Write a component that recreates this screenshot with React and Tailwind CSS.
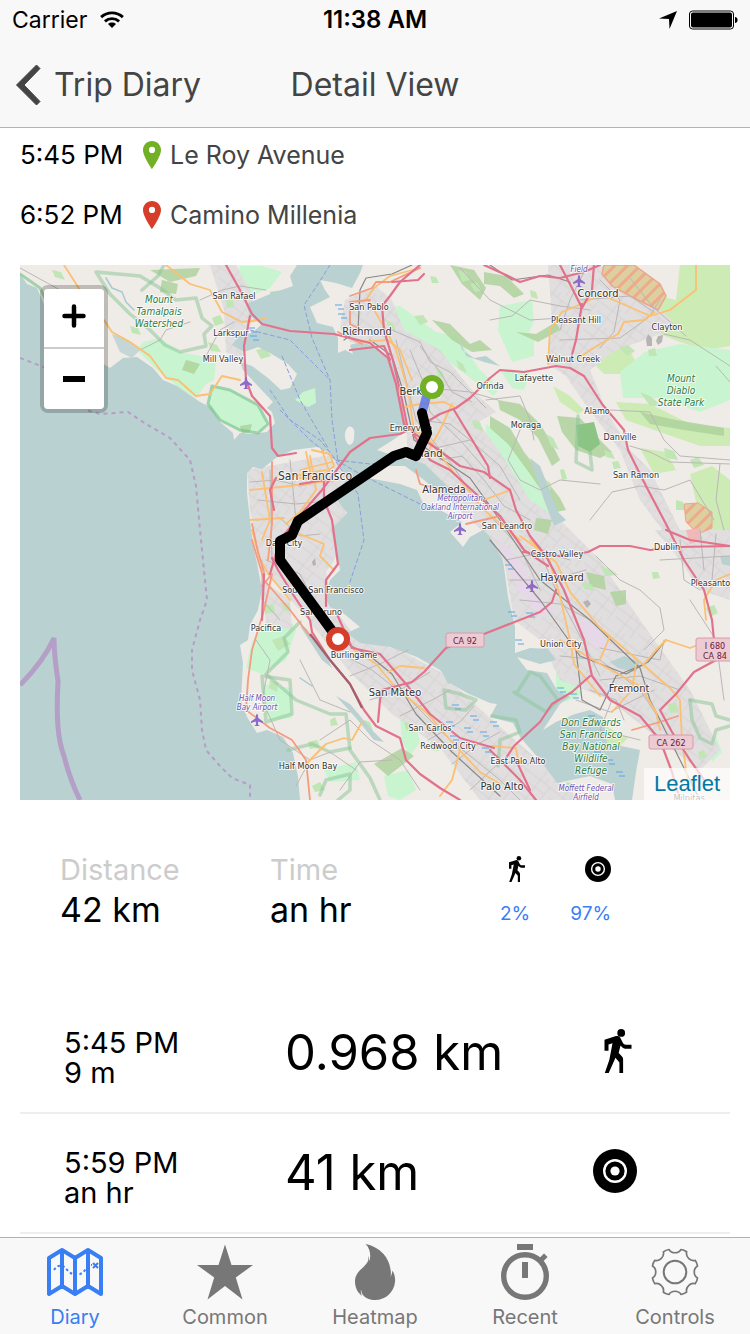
import React from "react";

const WATER =
  "M20 274L27 284L37 288L43 302L62 335L85 352L110 368L123 358L137 357L153 368L163 380L177 386L190 395L200 402L212 408L220 422L233 433L234 440L240 433L253 434L267 432L275 423L272 412L267 408L273 402L257 385L243 370L240 362L252 366L268 378L281 390L290 388L297 374L288 364L270 353L258 347L244 352L232 345L240 335L252 333L262 324L250 316L246 304L256 300L270 294L293 286L290 276L297 265L363 265L360 273L352 288L336 283L320 280L325 290L330 297L310 307L317 323L333 327L338 338L338 353L345 350L353 354L350 345L360 342L377 347L393 363L397 377L403 410L407 430L393 440L377 450L395 456L410 460L425 464L445 484L462 500L456 505L440 494L424 480L405 466L382 466L363 477L400 484L417 490L423 503L440 510L462 522L450 532L463 547L470 537L483 530L490 537L503 560L508 597L515 627L515 653L530 648L548 649L556 660L540 664L517 657L527 670L547 673L557 690L570 697L560 704L543 730L556 722L575 714L590 710L603 717L607 743L640 750L636 772L632 800L615 800L612 784L590 776L557 783L540 760L520 737L513 723L490 717L497 704L490 703L467 693L450 683L440 670L417 657L390 647L360 643L347 633L360 627L343 613L330 607L325 597L330 580L340 570L337 553L331 530L347 513L337 500L347 477L337 463L330 453L317 447L293 450L277 457L262 469L253 467L247 473L247 493L250 520L253 545L257 563L262 590L258 610L250 625L248 640L240 645L243 663L241 700L247 717L257 733L267 730L283 737L293 753L298 777L300 800L20 800Z";

const MINT = [
  "M143 342L160 338L180 352L200 356L216 362L214 380L206 384L196 398L177 386L155 368L137 350Z",
  "M212 386L230 390L258 405L266 420L262 431L240 432L220 420L208 404Z",
  "M240 266L262 266L282 272L270 288L250 296L236 284Z",
  "M386 307L400 306L436 332L456 336L480 370L499 388L494 396L470 378L440 355L420 340L392 322Z",
  "M295 400L303 392L315 388L316 403L308 407Z",
  "M486 424L510 440L528 466L558 512L562 532L545 530L525 500L503 462L486 440Z",
  "M500 306L532 300L534 322L526 338L534 356L512 362L498 330Z",
  "M645 352L680 344L730 350L730 400L700 412L660 398L623 398L620 372Z",
  "M290 540L312 542L334 562L324 572L300 578L280 560Z",
  "M252 642L268 620L290 618L296 630L286 660L262 674L246 668Z",
  "M262 684L290 688L292 718L268 720Z",
  "M602 628L616 608L632 624L628 632L612 636Z",
  "M324 770L356 762L360 780L330 782Z",
  "M384 776L408 770L416 790L400 800L388 796Z",
  "M400 716L414 720L420 742L410 756L402 742Z",
  "M705 742L716 736L722 752L712 762Z",
  "M254 476L276 477L276 484L254 484Z",
  "M500 370L530 372L524 390L512 388Z",
  "M524 332L534 334L534 356L524 354Z",
  "M556 672L574 684L582 694L566 702L556 688Z",
];

const LIME = [
  "M680 265L730 265L730 346L706 350L680 342L650 330L640 310L660 296L676 300Z",
  "M586 356L606 340L626 344L636 362L660 358L664 372L640 382L622 374L604 374Z",
  "M616 402L650 404L690 424L730 428L730 446L700 446L660 432L626 420Z",
  "M640 448L666 452L676 470L654 474Z",
  "M690 474L712 466L730 480L730 530L716 538L700 520Z",
  "M553 386L570 396L584 410L578 414L560 402Z",
  "M586 726L602 724L628 738L618 748L596 744Z",
  "M658 706L672 704L678 720L664 724Z",
];

const WOOD = [
  "M150 270L200 268L196 276L170 282Z",
  "M162 280L178 284L176 294L160 292Z",
  "M270 292L284 290L284 304L274 306Z",
  "M450 265L474 270L486 288L480 300L462 284Z",
  "M432 320L450 324L470 344L480 340L492 350L472 352L452 340Z",
  "M380 372L396 368L394 384L380 380Z",
  "M557 416L580 418L600 440L612 452L600 458L576 450L562 432Z",
  "M498 400L520 404L540 424L550 440L560 460L552 466L538 438L520 420L500 410Z",
  "M490 416L510 428L524 452L560 498L566 510L556 512L530 474L508 444L490 428Z",
  "M374 764L402 748L414 756L388 776Z",
  "M484 272L506 276L524 294L514 298L500 286L484 284Z",
  "M516 332L536 334L556 322L560 330L538 342Z",
  "M640 412L676 420L724 428L724 436L684 430L650 424Z",
  "M586 572L604 576L606 590L590 586Z",
  "M240 426L252 424L250 432L242 434Z",
  "M186 360L200 364L194 374L182 370Z",
  "M536 518L552 520L548 534L534 530Z",
  "M610 592L626 590L626 604L616 606Z",
];

const PATCHES = [
  "M458 270l8 2 4 8-8 2z", "M470 284l7-2 5 9-7 1z", "M430 276l6 1 3 6-7 0z", "M414 316l9-1 5 7-8 3z",
  "M530 290l6 2 2 7-7-2z", "M546 434l7 4 6 12-8-4z", "M604 450l8 3 3 6-9-2z", "M612 462l6-1 3 7-7 1z",
  "M544 480l6 2 1 8-6-2z", "M560 470l4-1 3 10-5 1z", "M640 392l10 4 12 10-12 0z", "M664 448l10 3 4 9-12-2z",
  "M690 460l8-3 6 8-10 3z", "M620 348l8-3 7 6-8 5z", "M648 350l7-2 2 8-8 0z", "M676 500l7 2 2 8-9 0z",
  "M600 566l10 3 8 6-12 1z", "M582 582l9 2 3 7-10-2z", "M652 572l6 0 2 6-7 1z", "M706 608l8-3 4 8-8 4z",
  "M342 604l10 3 7 9-8 3z", "M264 606l9-2 2 8-10 2z", "M282 602l7 2 2 7-8-1z", "M272 640l12-4 6 8-12 7z",
  "M330 720l5-3 3 8-7 1z", "M364 720l6 2 3 9-8-3z", "M404 722l7 1 2 10-7-3z", "M308 742l9-2 3 7-10 2z",
  "M270 680l8 3-1 9-8-4z", "M312 786l8-4 5 8-10 2z", "M430 742l7 2 2 7-8-1z", "M566 782l6 1 2 7-7 0z",
  "M668 704l8-1 3 9-9 1z", "M698 752l6-2 3 7-7 2z", "M212 318l8-3 4 8-9 3z", "M226 300l7 0 1 7-7 1z",
  "M208 342l9 3 4 7-10-1z", "M256 350l10-2 5 8-10 3z", "M130 326l8 2 3 7-9-2z", "M52 270l9 2 4 8-10-3z",
  "M386 320l7 3 3 9-7-4z", "M436 368l6 3 3 8-7-3z", "M456 360l7 4 4 9-8-4z", "M472 420l8 2 3 9-9-3z",
];

const URBAN = [
  "M247 470L330 455L346 478L340 500L346 514L333 532L338 554L326 572L332 606L358 640L400 650L440 672L460 690L470 700L540 762L580 800L480 800L440 748L392 714L350 672L300 610L262 570L250 510Z",
  "M345 300L376 286L392 300L404 330L440 350L470 388L496 412L478 422L500 452L530 500L560 520L600 560L640 620L690 690L720 750L700 770L660 740L610 700L560 680L540 640L514 620L504 560L484 532L440 492L408 460L406 420L398 372L380 346L350 342L340 328Z",
  "M548 265L600 265L640 290L672 320L660 334L612 352L590 370L606 410L630 450L650 470L680 530L670 540L640 500L620 450L588 408L566 376L548 364L552 320Z",
  "M210 265L236 265L250 290L256 312L244 330L242 360L226 352L224 310Z",
  "M655 530L730 530L730 600L700 590L680 560Z",
  "M262 580L290 600L292 630L266 624Z",
];

const GREY = [
  "M140 350L160 340L166 330L190 322",
  "M200 300L222 290L240 286L266 290",
  "M206 356L220 330L234 322",
  "M392 330L420 342L430 362L450 372L486 408",
  "M410 350L424 384L430 412L460 440L486 470",
  "M400 394L430 388L470 392L498 400",
  "M396 340L408 388L416 420L450 462L476 500L520 548L540 590",
  "M420 346L440 372L452 392L472 402",
  "M436 448L470 440L500 466L520 500",
  "M440 460L462 456L484 480L504 506L530 520",
  "M420 420L450 424L470 440",
  "M460 268L490 300L530 320L560 318",
  "M490 320L512 316L530 300L560 306L590 310",
  "M486 400L520 396L530 420L534 440",
  "M520 430L508 460L520 480L540 490L560 480L600 484",
  "M560 340L620 338L648 318L660 300",
  "M600 280L620 300L614 332L600 348",
  "M580 300L630 296L654 312",
  "M630 278L652 306L686 336",
  "M664 334L690 340L730 366",
  "M716 366L730 382",
  "M610 410L650 412L664 440L680 456L730 460",
  "M630 446L650 452L670 462L730 464",
  "M720 464L716 500L724 530",
  "M590 520L612 492L640 486L664 490L690 480L714 520",
  "M596 556L620 580L640 590L660 608L664 630L644 650",
  "M506 560L544 552L570 560",
  "M510 580L550 580L586 570",
  "M520 600L560 604L590 620",
  "M540 552L556 590L582 640L600 676",
  "M560 656L600 660L640 690L660 720",
  "M576 700L610 712L634 700L654 690",
  "M600 680L640 676L680 690",
  "M600 648L660 660L664 640",
  "M590 690L616 700L624 720",
  "M590 260L570 300L560 330",
  "M660 560L730 556",
  "M680 540L684 580L700 590",
  "M700 530L704 570",
  "M716 534L712 580",
  "M266 560L300 574L316 606L340 640",
  "M256 520L280 518L300 536L320 534",
  "M258 500L296 504L336 500",
  "M250 482L276 480L300 486L330 480",
  "M270 470L272 560",
  "M290 460L296 520",
  "M262 560L262 600L280 620",
  "M330 648L372 670L410 700L450 740L500 780L520 800",
  "M350 676L380 664L408 650",
  "M370 700L400 690L430 672",
  "M400 716L432 700L450 690",
  "M428 740L460 722L474 706",
  "M452 764L478 744L500 732",
  "M470 790L500 762L530 764",
  "M256 640L270 660L262 700L280 740L310 760",
  "M320 740L350 720L370 740L400 760L420 790",
  "M300 660L320 700L350 712",
  "M356 770L330 752L310 760L296 786",
  "M340 790L360 762L392 760",
  "M612 700L600 730L640 740",
  "M690 600L716 640L724 700",
  "M20 268L60 290L100 300",
];

const RAIL = [
  "M412 265L392 274L366 278L360 290L358 330L344 340",
  "M370 340L392 356L404 394L414 440L440 458L470 478L500 520L540 580L590 620L640 668L650 700L680 760L700 800",
  "M490 540L540 600L580 656L626 674L648 662L666 640",
  "M340 640L370 656L392 674L416 714L452 752L500 796",
  "M576 650L582 700L600 710L616 676L644 664",
  "M490 265L512 280L548 275L570 282",
];

const ORANGE = [
  "M64 265L80 290L104 320L112 332L130 342L150 356L166 378L178 380L196 396L210 394L222 376L240 380",
  "M166 265L190 284L210 290L222 312L242 322L256 320",
  "M250 322L266 318",
  "M366 300L374 288L390 276L420 268",
  "M368 300L386 330L396 350L408 390L414 430L428 438L450 468L484 510L520 540",
  "M360 342L388 340L400 350L412 380",
  "M400 408L420 404L444 402L456 408",
  "M452 404L440 430L430 448",
  "M548 364L550 330L562 312L586 302L600 294L650 316L670 310L696 290L696 265",
  "M578 358L600 344L618 334L624 322L644 320L654 312",
  "M484 500L510 490",
  "M250 490L290 486L336 480",
  "M262 472L270 520L262 540",
  "M312 450L330 454L334 466L320 478L300 478",
  "M310 456L316 490L300 512L286 524",
  "M300 470L332 462",
  "M294 476L326 470",
  "M306 452L312 480",
  "M322 450L330 474",
  "M250 520L284 518",
  "M300 534L324 544L320 556L334 570",
  "M252 530L260 560L270 576L290 600",
  "M354 650L376 664L396 688L428 714L450 740L480 772L500 784",
  "M308 762L326 744L344 738L352 740L362 722",
  "M388 672L400 666L424 668",
  "M460 750L452 780L440 796",
  "M530 540L548 556L560 596L570 640L574 664L600 696",
  "M520 536L556 562L570 592L600 628L640 662L670 688L680 700L682 740L688 784",
  "M560 640L600 664L640 686L656 712L660 730",
  "M636 664L632 690L612 712",
  "M610 636L600 660",
  "M706 620L704 600L716 580L730 574",
  "M490 746L516 748L518 760",
  "M644 664L656 650L666 640L690 648L700 644L730 650",
];

const CORAL = [
  "M370 300L350 302L350 324L362 330",
  "M350 296L372 288L376 282L390 282L420 268",
  "M338 332L362 344",
  "M272 462L272 524L268 560",
  "M252 540L264 580L290 610L310 636",
  "M262 586L272 574L264 610L252 650L248 680L246 710L270 728L292 740L306 760L310 800",
  "M252 524L258 552L264 572",
  "M632 730L660 722L678 716",
  "M416 470L420 484L434 488",
  "M466 524L500 516",
];

const PINK = [
  "M226 265L240 290L252 314L262 324L290 331L334 334L370 343L388 358L396 384L404 424L414 432",
  "M250 316L244 346L246 380L252 396L270 416L272 448L278 456L296 453",
  "M420 265L400 282L390 296L382 306L384 330L394 364L402 400L408 430L400 434L370 438L350 452L322 490L296 520L280 540L270 574",
  "M392 282L418 280L424 274",
  "M350 350L384 346L390 360",
  "M420 426L440 414L456 408L470 398L490 378L500 370L524 372L556 366L570 368L584 376L602 404L624 430L628 450L646 486L666 524L684 560L704 590L712 620L716 660L694 672L676 694L660 710L672 732L690 760L704 780",
  "M454 410L488 466L490 478",
  "M412 432L436 448L460 466L484 472L510 490L516 510L530 536L546 556L564 590L584 640L592 676L610 700L640 716L660 740L672 772L680 800",
  "M412 432L430 460L450 470L500 516L524 550L548 566",
  "M484 265L506 275L520 282L540 276L560 278L584 272L600 265",
  "M560 265L572 288L582 308L592 290L594 265",
  "M582 304L576 340L570 362",
  "M300 484L324 480L324 500L332 520L338 564L326 580L326 606",
  "M276 478L270 490L274 510",
  "M272 558L278 570L294 596L310 620L312 632L330 660L350 684L364 710L376 726L400 738L406 760L420 774L440 788L460 800",
  "M264 574L262 620",
  "M336 612L352 648L380 654L406 684L430 714L460 738L494 748",
  "M378 722L380 700L382 690L412 682L424 672L446 648L484 634L540 612L552 602L556 590",
  "M522 552L560 556L588 552L600 546L630 546L650 550L680 547L730 546",
  "M590 676L572 692L552 704L540 722L514 746L506 758",
  "M490 750L520 780L536 800",
  "M530 790L516 760",
  "M666 530L690 540L730 546",
];

const GREEN_EDGE = [
  "M96 272L110 294L130 314L150 330L165 345L180 352L206 346L204 334L212 326L202 318L196 298L176 300L160 288L140 276L96 272",
  "M142 290L158 276L164 265",
  "M300 622L284 638L288 652L266 674L296 700L330 714L346 714L350 750L370 778L380 800",
  "M320 795L326 780L350 774L350 790L338 800",
  "M288 750L312 744L330 752L350 748",
  "M516 694L530 672L540 676L558 700L546 712L514 692",
  "M690 700L712 704L716 716L730 720",
  "M690 700L692 720L700 738L712 744L716 730L730 726",
  "M578 416L576 462L592 470L590 452",
  "M262 676L290 680L292 714L266 722Z",
  "M498 766L500 740L520 732L516 720L492 716",
  "M444 690L460 694L476 700L466 710L446 708Z",
];

const ADMIN = [
  "M20 358L46 368L70 395L86 410L100 414L128 412L146 424L170 438L190 460L196 486L200 530L207 600L200 620L192 650L192 670L200 700L202 730L206 750L220 766L232 778L250 785L250 800",
];

const FERRY = [
  "M330 265L318 284L304 305L312 338L330 380L332 420L338 462",
  "M250 330L290 340L310 360L330 380",
  "M270 390L290 420L320 440L336 460",
  "M280 410L310 440L336 460L370 464L392 462",
  "M336 460L360 474L420 504",
  "M336 462L358 494L364 540L350 582",
  "M282 356L300 400L328 448",
];

const MARSH = [
  [335, 305], [338, 314], [248, 328], [250, 336], [505, 565], [508, 612], [515, 640], [526, 613],
  [452, 705], [446, 722], [470, 716], [480, 732], [450, 736], [464, 728], [490, 722], [557, 688],
  [570, 694], [482, 748], [588, 716], [606, 760], [616, 772], [594, 752],
];

const C = "#333333";
const PARK = "#2f7d43";
const AIR = "#6d52b5";
const LABELS = [
  ["San Rafael", 234, 299, 9, C], ["Larkspur", 231, 336, 9, C], ["Mill Valley", 223, 362, 9, C],
  ["San Pablo", 369, 310, 9, C], ["Richmond", 367, 335, 11, C], ["Concord", 598, 297, 11, C],
  ["Pleasant Hill", 576, 323, 9, C], ["Clayton", 667, 330, 9, C], ["Walnut Creek", 573, 362, 9, C],
  ["Lafayette", 534, 381, 9, C], ["Orinda", 490, 389, 9, C], ["Alamo", 597, 414, 9, C],
  ["Danville", 620, 440, 9, C], ["Moraga", 526, 428, 9, C], ["San Ramon", 636, 478, 9, C],
  ["Berkeley", 421, 395, 11, C], ["Emeryville", 411, 431, 9, C], ["Oakland", 422, 457, 11, C],
  ["San Francisco", 315, 480, 12, C], ["Alameda", 444, 493, 11, C], ["San Leandro", 507, 529, 9, C],
  ["Castro Valley", 557, 557, 9, C], ["Dublin", 667, 550, 9, C], ["Hayward", 562, 581, 11, C],
  ["Pleasanton", 713, 586, 9, C], ["Daly City", 284, 546, 9, C], ["South San Francisco", 323, 593, 9, C],
  ["San Bruno", 321, 615, 9, C], ["Pacifica", 266, 631, 9, C], ["Burlingame", 354, 658, 9, C],
  ["San Mateo", 395, 696, 11, C], ["Union City", 561, 647, 9, C], ["Fremont", 629, 692, 11, C],
  ["San Carlos", 430, 731, 9, C], ["Redwood City", 448, 749, 9, C], ["Half Moon Bay", 308, 769, 9, C],
  ["East Palo Alto", 518, 764, 9, C], ["Palo Alto", 502, 790, 11, C], ["Milpitas", 689, 801, 9, C],
];
const ITALICS = [
  ["Mount", 159, 303, 10, PARK], ["Tamalpais", 159, 315, 10, PARK], ["Watershed", 159, 327, 10, PARK],
  ["Mount", 681, 382, 10, PARK], ["Diablo", 681, 394, 10, PARK], ["State Park", 681, 406, 10, PARK],
  ["Don Edwards", 591, 726, 10, PARK], ["San Francisco", 591, 738, 10, PARK],
  ["Bay National", 591, 750, 10, PARK], ["Wildlife", 591, 762, 10, PARK], ["Refuge", 591, 774, 10, PARK],
  ["Field", 579, 272, 8, AIR], ["Metropolitan", 460, 501, 8, AIR],
  ["Oakland International", 460, 510, 8, AIR], ["Airport", 460, 519, 8, AIR],
  ["Half Moon", 257, 701, 8, AIR], ["Bay Airport", 257, 710, 8, AIR],
  ["Moffett Federal", 586, 791, 8, AIR], ["Airfield", 586, 800, 8, AIR],
];
const PLANES = [[246, 383], [579, 281], [532, 586], [460, 529], [257, 720]];

function Lines({ paths, ...rest }) {
  return (
    <g fill="none" strokeLinecap="round" strokeLinejoin="round" {...rest}>
      {paths.map((d, i) => (
        <path key={i} d={d} />
      ))}
    </g>
  );
}

function Labels({ items, ...rest }) {
  return (
    <g textAnchor="middle" stroke="#ffffff" strokeOpacity="0.75" strokeWidth="2" strokeLinejoin="round" paintOrder="stroke" {...rest}>
      {items.map(([text, x, y, size, fill]) => (
        <text key={text + x + y} x={x} y={y} fontSize={size} fill={fill}>
          {text}
        </text>
      ))}
    </g>
  );
}

function Shield({ x, y, w, h, lines }) {
  return (
    <g>
      <rect x={x} y={y} width={w} height={h} rx="2" fill="#eccbd3" stroke="#d99aac" />
      {lines.map((t, i) => (
        <text key={t} x={x + w / 2} y={y + 11 + i * 10} fontSize="9" fill="#6b1a3a" textAnchor="middle">
          {t}
        </text>
      ))}
    </g>
  );
}

function TripMap() {
  return (
    <svg viewBox="20 265 710 535" className="block w-full font-['DejaVu_Sans_Condensed','Noto_Sans',sans-serif]" role="img" aria-label="Trip map">
      <defs>
        <pattern id="streets" width="29" height="23" patternUnits="userSpaceOnUse" patternTransform="rotate(38)">
          <path d="M0 6H29M0 15H18M7 0V23M19 6V23M13 0V6M24 15H29" stroke="#d2cfcf" strokeWidth="0.7" fill="none" />
        </pattern>
        <pattern id="hatch" width="9" height="9" patternUnits="userSpaceOnUse" patternTransform="rotate(45)">
          <rect width="9" height="9" fill="#dccfa0" />
          <rect width="3" height="9" fill="#eeaa8a" />
        </pattern>
      </defs>
      <rect x="20" y="265" width="710" height="535" fill="#efebe6" />
      <g fill="#cdebb4">{LIME.map((d) => <path key={d} d={d} />)}</g>
      <g fill="#c8f5d0">{MINT.map((d) => <path key={d} d={d} />)}</g>
      <g fill="#e1dedf">{URBAN.map((d) => <path key={d} d={d} />)}</g>
      <g fill="url(#streets)">{URBAN.map((d) => <path key={d} d={d} />)}</g>
      <g fill="#aed29c" fillOpacity="0.85">{WOOD.map((d) => <path key={d} d={d} />)}</g>
      <g fill="#bfe6b4">{PATCHES.map((d) => <path key={d} d={d} />)}</g>
      <path d="M576 425L594 422L600 444L590 452L578 446Z" fill="#8cc486" />
      <path d="M496 536L520 560L540 600L556 610L540 616L518 590Z" fill="#e6d8e8" />
      <path d="M580 618L598 628L612 650L596 648L582 632Z" fill="#e6d8e8" />
      <path d={WATER} fill="#b9d1d1" />
      <path d="M348 427C352 425 356 430 354 436C355 442 350 448 347 443C344 437 344 432 348 427Z" fill="#efebe6" />
      <path d="M295 400L303 392L315 388L316 403L308 407Z" fill="#c8f5d0" />
      <g fill="#b9d1d1">
        <path d="M300 626L306 628L326 655L332 668L322 660Z" />
        <path d="M336 696L350 704L372 730L384 742L374 740L356 718Z" />
        <path d="M458 336L462 350L474 358L486 356L500 366L484 362L466 356Z" />
        <path d="M530 458L540 466L558 512L566 520L554 526L544 500Z" />
        <path d="M610 662L624 656L640 662L636 672L618 668Z" />
        <path d="M720 556L730 556L730 566L722 564Z" />
        <path d="M442 672L452 668L458 680L448 684Z" />
        <path d="M112 334L124 338L140 350L132 358L120 352Z" fillOpacity="0.8" />
      </g>
      <g fill="#a9a6a6" fillOpacity="0.8">
        <path d="M648 334l4 4 0 8-5 0-1-6z" />
        <path d="M658 336l5-1-1 7-4 3-2-4z" />
        <path d="M312 562l3-4 1 7-3 1z" />
        <path d="M583 602l5-2 3 4-4 4z" />
      </g>
      <path d="M604 265L634 265L660 284L666 296L658 310L646 304L630 296L612 286L602 274Z" fill="url(#hatch)" stroke="#eda58e" strokeWidth="1.5" />
      <path d="M684 504L698 503L712 512L712 528L698 534L686 522Z" fill="url(#hatch)" stroke="#eda58e" strokeWidth="1" />
      <path d="M686 530L700 528L702 540L690 544Z" fill="#f0b8b8" />
      <Lines paths={GREEN_EDGE} stroke="#8fc79a" strokeOpacity="0.55" strokeWidth="3.5" />
      <Lines paths={["M212 386L230 390L258 405L268 424L258 433L240 430L220 420L208 404Z", "M20 274L40 288L52 312"]} stroke="#6fbf88" strokeOpacity="0.6" strokeWidth="3" />
      <Lines paths={["M106 278L112 288L122 292L126 302L134 310", "M300 678L312 686"]} stroke="#a9c9d0" strokeWidth="1.5" />
      <Lines paths={GREY} stroke="#bbb7b7" strokeWidth="1" />
      <Lines paths={RAIL} stroke="#8b8787" strokeWidth="1.2" />
      <Lines paths={FERRY} stroke="#8f9bdc" strokeWidth="1" strokeDasharray="4 3" />
      <g stroke="#5aa5e6" strokeWidth="1">
        {MARSH.map(([x, y]) => (
          <path key={`${x}-${y}`} d={`M${x} ${y}h7M${x + 3} ${y + 4}h6`} />
        ))}
      </g>
      <Lines paths={ORANGE} stroke="#fbc072" strokeWidth="1.8" />
      <Lines paths={CORAL} stroke="#f49b80" strokeWidth="1.8" />
      <Lines paths={PINK} stroke="#e2728c" strokeWidth="2.2" />
      <path d="M310 634L330 660L350 684L362 708" fill="none" stroke="#a3606c" strokeWidth="2.2" />
      <Lines paths={ADMIN} stroke="#b59dc6" strokeWidth="2" strokeDasharray="4 4" strokeLinecap="butt" />
      <path d="M20 685C34 671 46 656 54 638C54 655 56 668 58 681C56 720 58 740 64 756C68 772 73 786 80 800" fill="none" stroke="#b49fc7" strokeWidth="5" />

      <g fill="#8c6bc8">
        {PLANES.map(([x, y]) => (
          <path key={`${x}-${y}`} transform={`translate(${x} ${y})`} d="M0-6C1-6 1.2-4 1.2-2L6 1.5V3L1.2 1.5L1 4.5L2.8 6H-2.8L-1 4.5L-1.2 1.5L-6 3V1.5L-1.2-2C-1.2-4-1-6 0-6Z" />
        ))}
      </g>
      <Labels items={LABELS} />
      <Labels items={ITALICS} fontStyle="italic" />
      <Shield x={446} y={633} w={38} h={14} lines={["CA 92"]} />
      <Shield x={696} y={638} w={38} h={23} lines={["I 680", "CA 84"]} />
      <Shield x={649} y={735} w={44} h={14} lines={["CA 262"]} />

      <path d="M429 387L422 413" stroke="#5470e6" strokeOpacity="0.8" strokeWidth="9" />
      <path d="M422 413L427 433L416 456L406 452L394 456L298 521L292 535L280 541V560L338 639" fill="none" stroke="#000000" strokeWidth="10" strokeLinecap="round" strokeLinejoin="round" />
      <circle cx="432" cy="387" r="9" fill="#ffffff" stroke="#72b026" strokeWidth="6" />
      <circle cx="338" cy="639" r="9" fill="#ffffff" stroke="#d63e2a" strokeWidth="6" />
    </svg>
  );
}

function Pin({ className }) {
  return (
    <svg viewBox="0 0 18 28" className={`h-7 w-[18px] shrink-0 ${className}`} fill="currentColor" aria-hidden="true">
      <path fillRule="evenodd" d="M9 0C4 0 0 4 0 8.900C0 15.500 9 28 9 28S18 15.500 18 8.900C18 4 14 0 9 0ZM9 12A3.100 3.100 0 1 1 9 5.800A3.100 3.100 0 0 1 9 12Z" />
    </svg>
  );
}

function Wheel({ className }) {
  return (
    <svg viewBox="0 0 44 44" className={className} aria-hidden="true">
      <circle cx="22" cy="22" r="22" />
      <circle cx="22" cy="22" r="10.800" fill="none" stroke="#ffffff" strokeWidth="2.400" />
      <circle cx="22" cy="22" r="4.600" fill="#ffffff" />
    </svg>
  );
}

function Walk({ className }) {
  return (
    <svg viewBox="-8.5 0 44 44" className={className} fill="currentColor" aria-hidden="true">
      <circle cx="16.700" cy="3.900" r="3.900" />
      <path d="M0 10.700L11.500 7C13.500 6.700 15 7.300 15.800 8.800L18.200 13.500C19 15 20 15.700 21.500 15.700H27V19.700H21C19 19.700 17.500 18.500 16 16.500L14.200 24L17.300 27.300C18.200 28.300 18.600 29.300 18.600 30.500V44H14.900V33.500L10.900 28.700L10 31L4.200 44H0.300L4.800 31L8 14.200L4 15.500V21.700H0Z" />
    </svg>
  );
}

function MapIcon() {
  return (
    <svg viewBox="0 0 56 56" className="size-14" fill="none" stroke="currentColor" aria-hidden="true">
      <path d="M2 14L15 6L28 14L41 6L54 14V50L41 42L28 50L15 42L2 50Z" strokeWidth="4" strokeLinejoin="round" />
      <path d="M15 6V42M28 14V50M41 6V42" strokeWidth="4" />
      <path d="M7 26C11 20 16 20 21 27C26 32 34 32 38 26C40 23 42 21 45 21" strokeWidth="2" strokeDasharray="2.500 2.500" />
      <path d="M46 19L51 24M51 19L46 24" strokeWidth="2" />
    </svg>
  );
}

function StarIcon() {
  return (
    <svg viewBox="0 0 56 56" className="size-14" fill="currentColor" aria-hidden="true">
      <path d="M28 0.500L34.500 21H56L38.800 33.500L45.500 55.500L28 42L10.500 55.500L17.200 33.500L0 21H21.500Z" />
    </svg>
  );
}

function FlameIcon() {
  return (
    <svg viewBox="0 0 56 56" className="size-14" fill="currentColor" aria-hidden="true">
      <path d="M18.500 0C29 2 42 10 43.800 27C44 29 44 31 43.500 33C44.500 31 45.200 29 45.500 26.500C47.500 30 48.500 34 48 38C47 48 39 56 28 56C23 56 18.500 54.500 16 51C14.500 49.500 14.500 47.500 14 45.500C13.500 47.500 14 50 15 52C10.500 48.500 8 43.500 8 37.500C8 27 18 24 21 17C21.500 15.500 21.500 13.500 21 11.500C22 13.500 22.500 16 22 18C24.500 12 23 4 18.500 0Z" />
    </svg>
  );
}

function StopwatchIcon() {
  return (
    <svg viewBox="0 0 56 56" className="size-14" fill="none" stroke="currentColor" aria-hidden="true">
      <circle cx="28" cy="32" r="21.300" strokeWidth="5.400" />
      <path d="M20 3H36M28 18V34" strokeWidth="6" />
      <path d="M42.500 17.500L48.800 11.200" strokeWidth="5" />
    </svg>
  );
}

function gearPath() {
  const parts = [];
  const at = (r, deg) => {
    const a = (deg * Math.PI) / 180;
    return `${(28 + r * Math.sin(a)).toFixed(2)} ${(28 - r * Math.cos(a)).toFixed(2)}`;
  };
  for (let i = 0; i < 8; i += 1) {
    const a = i * 45;
    parts.push(`${i === 0 ? "M" : "L"}${at(23.300, a - 15)}`);
    parts.push(`C${at(18.500, a - 11)} ${at(18.500, a + 11)} ${at(23.300, a + 15)}`);
    parts.push(`Q${at(23.800, a + 22)} ${at(23.300, a + 30)}`);
  }
  return `${parts.join("")}Z`;
}

function GearIcon() {
  return (
    <svg viewBox="0 0 56 56" className="size-14" fill="none" stroke="currentColor" strokeWidth="1.700" strokeLinejoin="round" aria-hidden="true">
      <path d={gearPath()} />
      <circle cx="28" cy="28" r="11.300" strokeWidth="2" />
    </svg>
  );
}

const TABS = [
  ["Diary", MapIcon],
  ["Common", StarIcon],
  ["Heatmap", FlameIcon],
  ["Recent", StopwatchIcon],
  ["Controls", GearIcon],
];

const STOPS = [
  ["5:45 PM", "Le Roy Avenue", "text-[#72b026]"],
  ["6:52 PM", "Camino Millenia", "text-[#d63e2a]"],
];

const SECTIONS = [
  ["5:45 PM", "9 m", "0.968 km", Walk],
  ["5:59 PM", "an hr", "41 km", Wheel],
];

export default function App() {
  return (
    <div className="flex min-h-screen flex-col bg-white font-['Inter',sans-serif] text-black">
      <header className="border-b border-[#b2b2b2] bg-[#f8f8f8]">
        <div className="grid h-10 grid-cols-3 items-center px-3 text-[23px]">
          <div className="flex items-center gap-3">
            <span>Carrier</span>
            <svg viewBox="0 0 26 19" className="h-[18px] w-[26px]" fill="none" stroke="#000000" strokeWidth="3" aria-hidden="true">
              <path d="M1.500 6.500C8 0.500 18 0.500 24.500 6.500M5.500 11C10 7 16 7 20.500 11" />
              <path d="M13 18L8.800 13.600C11.200 11.600 14.800 11.600 17.200 13.600Z" fill="#000000" stroke="none" />
            </svg>
          </div>
          <span className="text-center text-[24px] font-semibold">11:38 AM</span>
          <div className="flex items-center justify-end gap-3">
            <svg viewBox="0 0 18 18" className="size-[18px]" aria-hidden="true">
              <path d="M18 0L10.500 18L10 8L0 7.500Z" />
            </svg>
            <svg viewBox="0 0 49 20" className="h-5 w-[49px]" aria-hidden="true">
              <rect x="0.500" y="1" width="44" height="18" rx="3" fill="none" stroke="#000000" />
              <rect x="2" y="2.500" width="41" height="15" rx="2" />
              <path d="M46 7C49.500 7 49.500 13 46 13Z" />
            </svg>
          </div>
        </div>
        <div className="grid h-[87px] grid-cols-[1fr_auto_1fr] items-center px-4 pt-[2px] text-[32px] text-[#444444]">
          <button type="button" className="flex items-center gap-3 justify-self-start">
            <svg viewBox="0 0 26 40" className="h-10 w-[26px]" aria-hidden="true">
              <path d="M20.500 0L24 3.500L8 20L24 36.500L20.500 40L0.500 20Z" fill="#444444" stroke="#444444" />
            </svg>
            Trip Diary
          </button>
          <h1>Detail View</h1>
        </div>
      </header>

      <main className="flex-1 px-5">
        <ul className="flex flex-col gap-5 pt-[7px] pb-[30px] text-[25px] leading-10">
          {STOPS.map(([time, place, color]) => (
            <li key={time} className="flex items-center">
              <span className="w-[123px] text-[26px]">{time}</span>
              <Pin className={color} />
              <span className="pl-[9px] text-[#444444]">{place}</span>
            </li>
          ))}
        </ul>

        <section className="relative overflow-hidden" aria-label="Map">
          <TripMap />
          <div className="absolute top-5 left-5 w-[68px] overflow-hidden rounded-lg border-4 border-black/20 bg-clip-padding">
            <button type="button" aria-label="Zoom in" className="flex h-[60px] w-full items-center justify-center border-b-2 border-[#cccccc] bg-white pb-1">
              <svg viewBox="0 0 24 24" className="size-6" stroke="#000000" strokeWidth="4.500" strokeLinecap="round" aria-hidden="true">
                <path d="M2.500 12H21.500M12 2.500V21.500" />
              </svg>
            </button>
            <button type="button" aria-label="Zoom out" className="flex h-[60px] w-full items-center justify-center bg-white">
              <svg viewBox="0 0 24 24" className="size-6" stroke="#000000" strokeWidth="6" aria-hidden="true">
                <path d="M1 12H23" />
              </svg>
            </button>
          </div>
          <a href="#leaflet" className="absolute right-0 bottom-0 bg-white/70 px-[10px] font-['Liberation_Sans',sans-serif] text-[22px] leading-8 text-[#0078a8]">
            Leaflet
          </a>
        </section>

        <section className="grid grid-cols-[210px_210px_1fr] px-10 pt-[50px] pb-[64px]">
          <div className="leading-10">
            <h2 className="text-[29px] text-[#cccccc]">Distance</h2>
            <p className="text-[34px]">42 km</p>
          </div>
          <div className="leading-10">
            <h2 className="text-[29px] text-[#cccccc]">Time</h2>
            <p className="text-[34px]">an hr</p>
          </div>
          <div className="flex gap-10 pl-5 text-[19px] leading-7 text-[#387ef5]">
            <div className="flex flex-col items-start gap-[18px]">
              <Walk className="mt-[6px] ml-1 size-[26px] text-black" />
              <span>2%</span>
            </div>
            <div className="flex flex-col items-end gap-[18px]">
              <Wheel className="mt-[6px] size-[26px]" />
              <span>97%</span>
            </div>
          </div>
        </section>

        <ul>
          {SECTIONS.map(([time, duration, distance, Icon]) => (
            <li key={time} className="grid h-[120px] grid-cols-[221px_1fr_230px] items-center border-b-2 border-[#eeeeee] pl-[44px]">
              <div className="pt-[10px] text-[29px] leading-[30px]">
                <p>{time}</p>
                <p>{duration}</p>
              </div>
              <p className="text-[49px] leading-[60px] whitespace-nowrap">{distance}</p>
              <div className="flex justify-center pb-1">
                <Icon className="size-11" />
              </div>
            </li>
          ))}
        </ul>
      </main>

      <nav className="sticky bottom-0 grid h-[97px] grid-cols-5 border-t border-[#b2b2b2] bg-[#f8f8f8]">
        {TABS.map(([name, Icon], i) => (
          <a key={name} href={`#${name.toLowerCase()}`} className={`flex flex-col items-center gap-1 pt-[6px] text-[20px] leading-[26px] ${i === 0 ? "text-[#387ef5]" : "text-[#777777]"}`}>
            <Icon />
            {name}
          </a>
        ))}
      </nav>
    </div>
  );
}
